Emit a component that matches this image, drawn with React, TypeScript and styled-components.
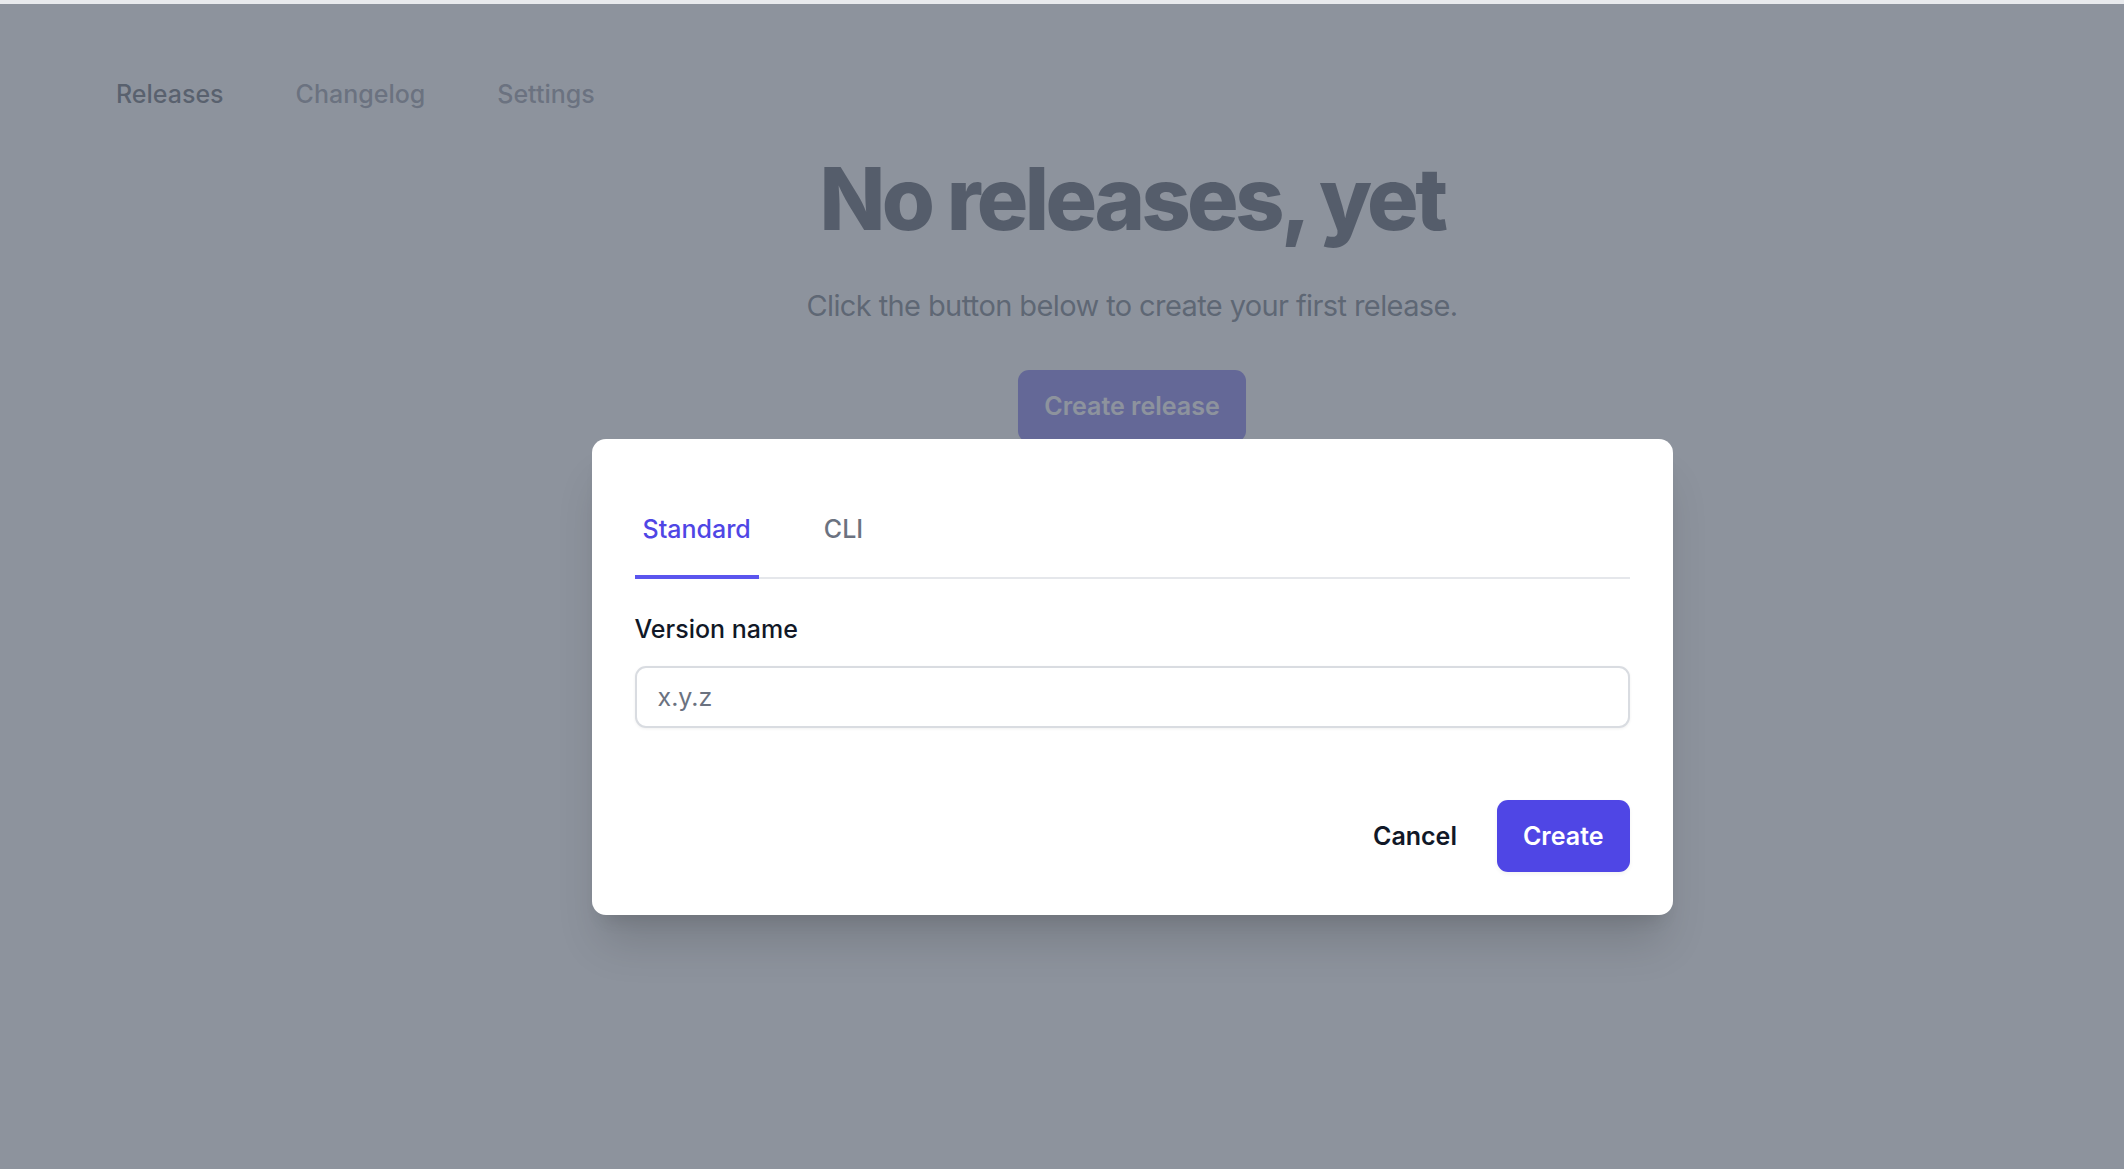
import React, { useState } from "react";
import styled, { createGlobalStyle } from "styled-components";

const GlobalStyle = createGlobalStyle`
  html, body {
    margin: 0;
    padding: 0;
    height: 100%;
    background: #ffffff;
  }
  body {
    font-family: Inter, "Noto Sans", "Liberation Sans", sans-serif;
    -webkit-font-smoothing: antialiased;
  }
  #root {
    height: 100%;
  }
  * {
    box-sizing: border-box;
  }
`;

const Shell = styled.div`
  height: 1169px;
  display: flex;
  flex-direction: column;
  overflow: hidden;
`;

const TopStrip = styled.div`
  height: 4px;
  flex: none;
  background: #e8eaed;
`;

const Viewport = styled.div`
  position: relative;
  flex: 1;
  display: flex;
  flex-direction: column;
`;

const NavBar = styled.nav`
  display: flex;
  gap: 72px;
  padding: 72px 0 0 116px;
`;

const NavLink = styled.a<{ $current?: boolean }>`
  font-size: 25px;
  line-height: 36px;
  font-weight: 500;
  color: ${(p) => (p.$current ? "#1f2937" : "#6b7280")};
  text-decoration: none;
  cursor: pointer;
`;

const Main = styled.main`
  display: flex;
  flex-direction: column;
  align-items: center;
  padding-left: 140px;
  text-align: center;
`;

const Title = styled.h1`
  margin: 44px 0 0;
  font-size: 86px;
  line-height: 86px;
  font-weight: 800;
  letter-spacing: -0.042em;
  color: #111827;
`;

const Subtitle = styled.p`
  margin: 42px 0 0;
  font-size: 29px;
  line-height: 43px;
  letter-spacing: -0.6px;
  color: #374151;
`;

const PrimaryButton = styled.button`
  height: 72px;
  padding: 0 26px;
  border: none;
  border-radius: 11px;
  background: #4f46e5;
  color: #ffffff;
  font-family: inherit;
  font-size: 25px;
  font-weight: 600;
  cursor: pointer;
  box-shadow: 0 2px 4px rgba(0, 0, 0, 0.05);
`;

const HeroButton = styled(PrimaryButton)`
  margin-top: 43px;
`;

const Overlay = styled.div`
  position: absolute;
  inset: 0;
  background: rgba(107, 114, 128, 0.77);
`;

const ModalLayer = styled.div`
  position: absolute;
  inset: 0;
  display: flex;
  justify-content: center;
  align-items: flex-start;
  padding: 435px 0 0 140px;
`;

const Dialog = styled.div`
  width: 1081px;
  padding: 43px;
  background: #ffffff;
  border-radius: 14px;
  box-shadow: 0 36px 45px -9px rgba(0, 0, 0, 0.14),
    0 14px 18px -11px rgba(0, 0, 0, 0.12);
  display: flex;
  flex-direction: column;
`;

const TabList = styled.div`
  display: flex;
  gap: 57px;
  padding-top: 29px;
  border-bottom: 2px solid #e5e7eb;
`;

const Tab = styled.button<{ $active?: boolean }>`
  margin-bottom: -2px;
  padding: 0 8px 28px;
  border: none;
  border-bottom: 4px solid ${(p) => (p.$active ? "#5b55ee" : "transparent")};
  background: none;
  font-family: inherit;
  font-size: 25px;
  line-height: 36px;
  font-weight: 500;
  color: ${(p) => (p.$active ? "#4f46e5" : "#6b7280")};
  cursor: pointer;
`;

const Label = styled.label`
  margin-top: 32px;
  font-size: 25px;
  line-height: 36px;
  font-weight: 500;
  color: #111827;
`;

const TextInput = styled.input`
  margin-top: 19px;
  height: 62px;
  padding: 0 21px;
  border: 2px solid #d9dce1;
  border-radius: 11px;
  box-shadow: 0 1px 3px rgba(0, 0, 0, 0.06);
  font-family: inherit;
  font-size: 25px;
  color: #111827;
  outline: none;

  &::placeholder {
    color: #6b7280;
  }
`;

const Actions = styled.div`
  margin-top: 72px;
  display: flex;
  justify-content: flex-end;
  align-items: center;
  gap: 14px;
`;

const GhostButton = styled.button`
  height: 72px;
  padding: 0 26px;
  border: none;
  background: none;
  font-family: inherit;
  font-size: 25px;
  font-weight: 600;
  color: #111827;
  cursor: pointer;
`;

const navItems = ["Releases", "Changelog", "Settings"];
const tabs = ["Standard", "CLI"];

export default function App() {
  const [tab, setTab] = useState("Standard");
  const [version, setVersion] = useState("");

  return (
    <>
      <GlobalStyle />
      <Shell>
        <TopStrip />
        <Viewport>
          <NavBar>
            {navItems.map((item, i) => (
              <NavLink key={item} $current={i === 0}>
                {item}
              </NavLink>
            ))}
          </NavBar>

          <Main>
            <Title>No releases, yet</Title>
            <Subtitle>Click the button below to create your first release.</Subtitle>
            <HeroButton>Create release</HeroButton>
          </Main>

          <Overlay />

          <ModalLayer>
            <Dialog role="dialog">
              <TabList>
                {tabs.map((t) => (
                  <Tab key={t} $active={tab === t} onClick={() => setTab(t)}>
                    {t}
                  </Tab>
                ))}
              </TabList>
              <Label htmlFor="version">Version name</Label>
              <TextInput
                id="version"
                placeholder="x.y.z"
                value={version}
                onChange={(e) => setVersion(e.target.value)}
              />
              <Actions>
                <GhostButton>Cancel</GhostButton>
                <PrimaryButton>Create</PrimaryButton>
              </Actions>
            </Dialog>
          </ModalLayer>
        </Viewport>
      </Shell>
    </>
  );
}
